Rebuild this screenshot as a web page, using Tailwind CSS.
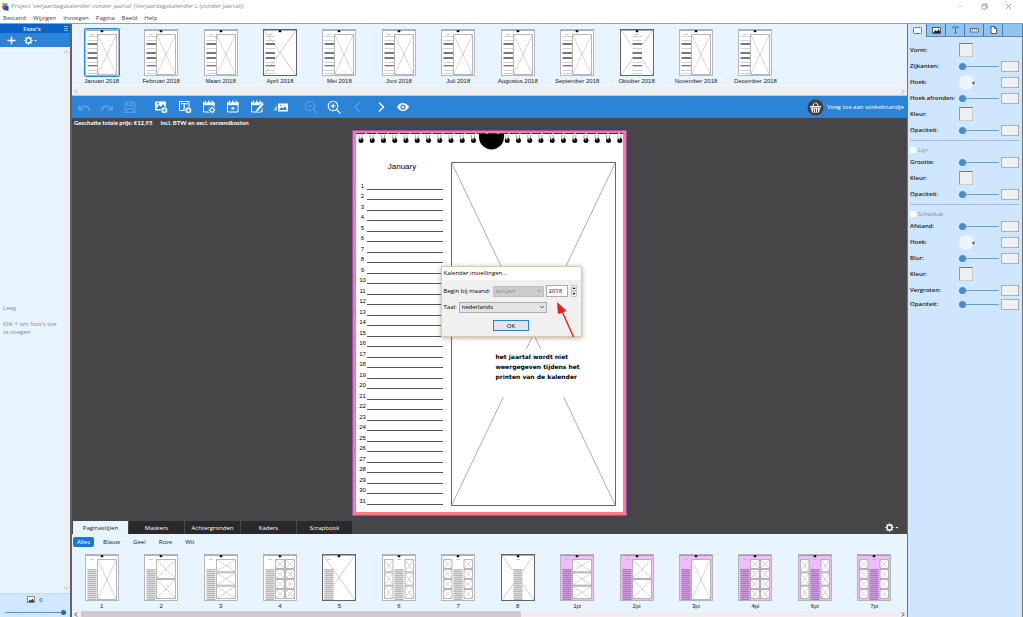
<!DOCTYPE html>
<html lang="nl">
<head>
<meta charset="utf-8">
<title>Project 'verjaardagskalender zonder jaartal'</title>
<script src="https://cdn.jsdelivr.net/npm/@tailwindcss/browser@4"></script>
</head>
<body class="h-screen flex flex-col overflow-hidden bg-white font-['Open_Sans','Noto_Sans',sans-serif] text-[6px] leading-[8px] text-[#222]">

<header class="h-[24px] shrink-0 border-b border-[#9a9fa3]">
  <div class="flex h-[12px] items-center justify-between pl-px pr-[11px]">
    <div class="flex items-center gap-[2px] text-[#8a8a8a]">
      <svg width="8" height="9" viewBox="0 0 8 9"><path d="M1 1h3v4H1z" fill="#f5a623"/><path d="M3 1.500h3.500v4H3z" fill="#3c9be8"/><path d="M1 4h3.500v4H2z" fill="#d8435c"/><path d="M3 4h4.500v4.500H4z" fill="#1e52b8"/></svg>
      <h1>Project 'verjaardagskalender zonder jaartal' (Verjaardagskalender L (zonder jaartal))</h1>
    </div>
    <div class="flex items-center gap-[17px]">
      <button aria-label="Minimaliseren"><svg width="7" height="7" viewBox="0 0 7 7"><path d="M1 3.500h5" stroke="#ddd" fill="none"/></svg></button>
      <button aria-label="Verkleinen"><svg width="7" height="7" viewBox="0 0 7 7" fill="none" stroke="#888" stroke-width=".7"><path d="M1 2.200h4v4H1zM2.200 2V1h4v4H5"/></svg></button>
      <button aria-label="Sluiten"><svg width="7" height="7" viewBox="0 0 7 7" fill="none" stroke="#888" stroke-width=".7"><path d="M1 1l5 5M6 1L1 6"/></svg></button>
    </div>
  </div>
  <nav class="flex h-[11px] items-center gap-[7px] pl-[3px] text-[#444]">
    <button>Bestand</button><button>Wijzigen</button><button>Invoegen</button><button>Pagina</button><button>Beeld</button><button>Help</button>
  </nav>
</header>

<div class="flex min-h-0 flex-1">
  <aside class="flex w-[72px] shrink-0 flex-col border-r-2 border-[#5d6368] bg-[#e8f4ff]">
    <div class="flex h-[9px] items-center bg-[#0864c6] text-white">
      <h2 class="flex-1 text-center font-semibold">Foto's</h2>
      <svg width="5" height="7" viewBox="0 0 5 7" class="mr-px"><path d="M0 1.500h4M0 3.500h4M0 5.500h4" stroke="#b8dcff" stroke-width=".7"/></svg>
    </div>
    <div class="flex h-[14px] items-center gap-[8px] bg-[#2b84d8] pl-[7px]">
      <button aria-label="Toevoegen"><svg width="9" height="9" viewBox="0 0 9 9"><path d="M4.500 .5v8M.5 4.500h8" stroke="#fff" stroke-width="1.500"/></svg></button>
      <button aria-label="Instellingen"><svg width="15" height="9" viewBox="0 0 15 9"><use href="#gear"/><path d="M10 4h3l-1.500 1.500z" fill="#fff"/></svg></button>
    </div>
    <div class="flex min-h-0 flex-1">
      <div class="flex flex-1 flex-col justify-center gap-[8px] pl-[3px] text-[#7e878f]">
        <p>Leeg</p>
        <p class="whitespace-nowrap">Klik + om foto's toe<br>te voegen</p>
      </div>
      <div class="flex w-[7px] flex-col items-center justify-between bg-[#f0f0f0] py-[2px]">
        <svg width="5" height="5" viewBox="0 0 5 5"><path d="M.5 3.500l2-2 2 2" fill="none" stroke="#aaa"/></svg>
        <svg width="5" height="5" viewBox="0 0 5 5"><path d="M.5 1.500l2 2 2-2" fill="none" stroke="#aaa"/></svg>
      </div>
    </div>
    <div class="h-[24px] border-t border-[#c2d8ec] bg-[#cfe7ff]">
      <div class="flex h-[11px] items-center justify-center gap-[4px]">
        <svg width="8" height="7" viewBox="0 0 8 7"><path d="M.5.5h7v6h-7z" fill="#fff" stroke="#555" stroke-width=".7"/><path d="M1 6l2-2.500 1 1L5.500 2.500 7 5v1z" fill="#444"/></svg><span>0</span>
      </div>
      <input type="range" aria-label="Formaat" value="100" class="mx-[5px] my-[4px] block h-[6px] w-[61px] appearance-none bg-[linear-gradient(#5b93c6,#5b93c6)] bg-[length:100%_1px] bg-center bg-no-repeat [&::-webkit-slider-thumb]:size-[5px] [&::-webkit-slider-thumb]:appearance-none [&::-webkit-slider-thumb]:rounded-full [&::-webkit-slider-thumb]:bg-[#2468b0]">
    </div>
  </aside>

  <main class="flex min-w-0 flex-1 flex-col">
    <section class="h-[63px] shrink-0 bg-[#e8f4ff] pt-[5px] pr-[3px]"><div id="months" class="grid grid-cols-14"></div></section>
    <div class="flex h-[9px] shrink-0 items-center justify-between border-b border-[#c4c8cc] bg-[#efefef] px-[2px]">
      <svg width="4" height="5" viewBox="0 0 4 5"><path d="M3 .5l-2 2 2 2" fill="none" stroke="#aaa"/></svg>
      <svg width="4" height="5" viewBox="0 0 4 5"><path d="M1 .5l2 2-2 2" fill="none" stroke="#aaa"/></svg>
    </div>

    <div class="flex h-[22px] shrink-0 items-center bg-[#2b84d8] text-white">
      <div class="flex [&>button]:w-[23px] [&_svg]:mx-auto">
        <button aria-label="Ongedaan maken"><svg width="14" height="14" viewBox="0 0 14 14"><path d="M12.500 11C12 6.500 8 4.500 4 7.500" fill="none" stroke="#5c9fe0" stroke-width="1.800"/><path d="M1 5v5.500h6z" fill="#5c9fe0"/></svg></button>
        <button aria-label="Opnieuw"><svg width="14" height="14" viewBox="0 0 14 14"><path d="M1.500 11C2 6.500 6 4.500 10 7.500" fill="none" stroke="#5c9fe0" stroke-width="1.800"/><path d="M13 5v5.500H7z" fill="#5c9fe0"/></svg></button>
        <button aria-label="Opslaan"><svg width="14" height="14" viewBox="0 0 14 14" fill="none" stroke="#5c9fe0" stroke-width="1.200"><path d="M2 2h9l1 1v9.500H2zM4.500 2v3.500h5V2M4 12.500V8.500h6v4M8 2.500v2"/></svg></button>
      </div>
      <div class="ml-[8px] flex [&>button]:w-[24px] [&_svg]:mx-auto">
        <button aria-label="Foto toevoegen"><svg width="14" height="14" viewBox="0 0 14 14"><path d="M1 1.500h11v9H1z" fill="#fff"/><path d="M2 9l3-4 2 2 2-3 2 3v2z" fill="#2b84d8"/><circle cx="4" cy="3.500" r="1" fill="#2b84d8"/><use href="#plus"/></svg></button>
        <button aria-label="Tekst toevoegen"><svg width="14" height="14" viewBox="0 0 14 14"><path d="M1.500 1.500h9.500v9h-9.500z" fill="none" stroke="#fff"/><path d="M3.500 4.500V3.500h5.500v1M6.250 3.500v5.500M5 9h2.500" fill="none" stroke="#fff" stroke-width="1.200"/><use href="#plus"/></svg></button>
        <button aria-label="Kalenderinstellingen"><svg width="14" height="14" viewBox="0 0 14 14"><use href="#cal"/><circle cx="10" cy="10" r="3.800" fill="#2b84d8"/><g transform="translate(6.300 6.300) scale(.82)"><use href="#gear"/></g></svg></button>
        <button aria-label="Kalender"><svg width="14" height="14" viewBox="0 0 14 14"><use href="#cal"/><path d="M5.500 7.200h2.800v2.300H5.500z" fill="#fff"/></svg></button>
        <button aria-label="Kalender bewerken"><svg width="14" height="14" viewBox="0 0 14 14"><use href="#cal"/><path d="M13 4l-6 7" stroke="#2b84d8" stroke-width="4"/><path d="M13.500 4L8 10.700l-1.500.8.300-1.800L12.300 3z" fill="#fff" stroke="#fff" stroke-width=".5"/></svg></button>
        <button aria-label="Foto's vullen"><svg width="16" height="14" viewBox="0 0 16 14"><path d="M5 3.500h10v8H5z" fill="#fff"/><path d="M6 10l2.200-3 2 1.500L12 6l2 4z" fill="#2b84d8"/><circle cx="7.500" cy="5.500" r=".8" fill="#2b84d8"/><path d="M4 5v5.500H0z" fill="#9cc9f2"/></svg></button>
      </div>
      <div class="ml-[6px] flex [&>button]:w-[23px] [&_svg]:mx-auto">
        <button aria-label="Uitzoomen"><svg width="14" height="14" viewBox="0 0 14 14" fill="none" stroke="#5fa3e2" stroke-width="1.100"><circle cx="6" cy="6" r="4.500"/><path d="M4 6h4M9.300 9.300l4 4"/></svg></button>
        <button aria-label="Inzoomen"><svg width="14" height="14" viewBox="0 0 14 14" fill="none" stroke="#fff" stroke-width="1.100"><circle cx="6" cy="6" r="4.800"/><path d="M3.500 6h5M6 3.500v5M9.500 9.500l4 4"/></svg></button>
        <button aria-label="Vorige"><svg width="14" height="14" viewBox="0 0 14 14"><path d="M9.500 2.500L5 7l4.500 4.500" fill="none" stroke="#5fa3e2" stroke-width="1.200"/></svg></button>
        <button aria-label="Volgende"><svg width="14" height="14" viewBox="0 0 14 14"><path d="M6 2.500L10.500 7 6 11.500" fill="none" stroke="#fff" stroke-width="1.400"/></svg></button>
        <button aria-label="Voorbeeld"><svg width="14" height="14" viewBox="0 0 14 14"><path d="M1 7c3-5.500 9-5.500 12 0-3 5.500-9 5.500-12 0z" fill="#fff"/><circle cx="7" cy="7" r="2.600" fill="#2b84d8"/><circle cx="7" cy="7" r="1.300" fill="#fff"/></svg></button>
      </div>
      <button class="ml-auto mr-[3px] flex items-center gap-[3px] whitespace-nowrap">
        <svg width="17" height="17" viewBox="0 0 17 17"><circle cx="8.500" cy="8.500" r="8" fill="#3d3f42"/><path d="M3 7h11v1.500H3zM4 9h9l-1 4.500H5z" fill="#fff"/><path d="M5.500 7L8 3.500M11.500 7L9 3.500" stroke="#fff"/><path d="M6.500 9.500V13M8.500 9.500V13M10.500 9.500V13" stroke="#3d3f42" stroke-width=".9"/></svg>
        <span>Voeg toe aan winkelmandje</span>
      </button>
    </div>

    <section class="flex min-h-0 flex-1 flex-col bg-[#464649] pr-px">
      <p class="flex h-[12px] shrink-0 items-center gap-[8px] pb-[2px] pl-[2px] font-['Lato',sans-serif] font-bold text-white"><span>Geschatte totale prijs: €12,95</span><span>Incl. BTW en excl. verzendkosten</span></p>
      <div class="relative mx-auto flex h-[386px] w-[275px] shrink-0 border border-[#9a48c0] bg-white font-['Liberation_Sans',sans-serif] text-black outline-[3px] -outline-offset-4 outline-[#ff7c86]">
        <svg class="absolute left-0 top-0" width="273" height="20" viewBox="0 0 273 20" id="spiral"></svg>
        <div class="flex w-[98px] flex-col pl-[6px]">
          <h3 class="mt-[31px] pr-[5px] text-center text-[8px] leading-[10px]">January</h3>
          <ol id="days" class="mt-[7px] grid h-[326px] auto-rows-fr text-[6px] leading-[6px]"></ol>
        </div>
        <svg class="mt-[31px]" width="165" height="344" viewBox="0 0 165 344" fill="none"><path d="M.5.5L164.500 343.500M164.500.5L.5 343.500" stroke="#999" stroke-width=".8"/><path d="M30 187h105v48H30z" fill="#fff"/><path d="M.5.5h164v343H.5z" stroke="#666"/></svg>
        <p class="absolute left-[143px] top-[221px] whitespace-nowrap font-['DejaVu_Sans',sans-serif] text-[6px] leading-[10px] font-bold">het jaartal wordt niet<br>weergegeven tijdens het<br>printen van de kalender</p>

        <form class="absolute left-[88px] top-[135px] flex h-[71px] w-[141px] flex-col border border-[#d8cda4] bg-[#f0f0f0] font-['Open_Sans',sans-serif] text-[6px] leading-[8px] shadow-[0_1px_5px_rgba(80,70,40,.45)]">
          <h2 class="h-[13px] bg-white pl-[2px] pt-[2px]">Kalender instellingen...</h2>
          <div class="mt-[5px] flex h-[12px] items-center pl-[2px]">
            <label for="maand" class="w-[49px] whitespace-nowrap">Begin bij maand:</label>
            <span class="relative"><select id="maand" disabled class="block h-[11px] w-[51px] appearance-none border border-[#bfbfbf] bg-[#ccc] pl-[2px] text-[#8a8a8a] opacity-100"><option>Januari</option></select><svg class="absolute right-[2px] top-[3px]" width="6" height="5" viewBox="0 0 6 5"><path d="M1 1l2 2 2-2" fill="none" stroke="#999" stroke-width=".7"/></svg></span>
            <input aria-label="Jaar" value="2018" class="ml-[2px] h-[12px] w-[22px] border border-[#aaa] bg-white pl-[2px]">
            <svg class="ml-[3px]" width="6" height="12" viewBox="0 0 6 12"><path d="M.5.5h5v5h-5zM.5 6.500h5v5h-5z" fill="#f4f4f4" stroke="#aaa" stroke-width=".6"/><path d="M1.500 4L3 2l1.500 2zM1.500 8L3 10l1.500-2z" fill="#111"/></svg>
          </div>
          <div class="mt-[4px] flex h-[12px] items-center pl-[2px]">
            <label for="taal" class="w-[15px]">Taal:</label>
            <span class="relative"><select id="taal" class="block h-[11px] w-[88px] appearance-none border border-[#adadad] bg-[#e3e3e3] pl-[2px] text-black"><option>nederlands</option></select><svg class="absolute right-[2px] top-[3px]" width="6" height="5" viewBox="0 0 6 5"><path d="M1 1l2 2 2-2" fill="none" stroke="#444" stroke-width=".8"/></svg></span>
          </div>
          <button type="button" class="mt-[7px] mx-auto h-[11px] w-[36px] border border-[#2880c8] bg-[#dfe5ea] leading-[8px]">OK</button>
          <svg class="absolute left-[113px] top-[33px]" width="20" height="39" viewBox="0 0 20 39"><path d="M18.500 37L6 9" stroke="#f01818" stroke-width="1.400"/><path d="M2 2l9.500 9L3 14z" fill="#f01818"/></svg>
        </form>
      </div>
      <div class="mt-auto flex h-[13px] items-end pl-px text-[6px] text-white">
        <div class="flex gap-px [&>button]:h-[13px] [&>button]:w-[55px]">
          <button class="bg-[#e8f4ff] text-[#222]">Paginastijlen</button>
          <button class="bg-[#29292b]">Maskers</button>
          <button class="bg-[#29292b]">Achtergronden</button>
          <button class="bg-[#29292b]">Kaders</button>
          <button class="bg-[#29292b]">Scrapbook</button>
        </div>
        <button aria-label="Opties" class="ml-auto mr-[6px] self-center"><svg width="15" height="9" viewBox="0 0 15 9"><use href="#gear"/><path d="M10.500 4h3L12 5.500z" fill="#fff"/></svg></button>
      </div>
    </section>

    <section class="h-[77px] shrink-0 bg-[#e8f4ff] pr-[3px]">
      <div class="flex h-[15px] items-center gap-[13px] pl-px text-[#222]">
        <button class="-mr-[4px] h-[10px] w-[21px] rounded-[2px] bg-[#1a78d2] text-white">Alles</button><button>Blauw</button><button>Geel</button><button>Roze</button><button>Wit</button>
      </div>
      <div id="styles" class="mt-[5px] grid grid-cols-14"></div>
    </section>
    <div class="flex h-[6px] shrink-0 items-center bg-[#efefef] px-[2px]">
      <svg width="4" height="5" viewBox="0 0 4 5"><path d="M3 .5l-2 2 2 2" fill="none" stroke="#333"/></svg>
      <div class="ml-[3px] h-full w-[53%] bg-[#cbcbcb]"></div>
      <svg class="ml-auto" width="4" height="5" viewBox="0 0 4 5"><path d="M1 .5l2 2-2 2" fill="none" stroke="#333"/></svg>
    </div>
  </main>

  <aside class="w-[116px] shrink-0 border-x border-[#6b747c] bg-[#cfe6ff]">
    <div class="flex h-[13px] border-b border-[#5d87ae] bg-[#8fc4f4] [&>button]:flex [&>button]:w-[19px] [&>button]:items-center [&>button]:justify-center [&>button]:border-r [&>button]:border-[#4f7ba4]">
      <button aria-label="Vorm" class="-mb-px bg-[#cfe6ff]"><svg width="9" height="7" viewBox="0 0 9 7"><rect x=".5" y=".5" width="8" height="6" rx="1" fill="#fff" stroke="#555" stroke-width=".8"/></svg></button>
      <button aria-label="Foto"><svg width="9" height="7" viewBox="0 0 9 7"><path d="M.5.5h8v6h-8z" fill="#fff" stroke="#333" stroke-width=".8"/><path d="M1 6l2.500-3L5 4.500 6.500 2 8 4.500V6z" fill="#222"/></svg></button>
      <button aria-label="Tekst"><svg width="7" height="8" viewBox="0 0 7 8"><path d="M.8 2.500V1h5.400v1.500M3.500 1v6M2.200 7h2.600" fill="none" stroke="#4c6f91" stroke-width="1"/></svg></button>
      <button aria-label="Liniaal"><svg width="9" height="5" viewBox="0 0 9 5"><path d="M.5.5h8v3.500h-8z" fill="#eee" stroke="#555" stroke-width=".8"/><path d="M2.500 1v1.500M4.500 1v1.500M6.500 1v1.500" stroke="#555" stroke-width=".6"/></svg></button>
      <button aria-label="Pagina"><svg width="7" height="8" viewBox="0 0 7 8"><path d="M1 .5h3.500l2 2v5H1z" fill="#fff" stroke="#333" stroke-width=".8"/><path d="M4.500.5v2h2" fill="none" stroke="#333" stroke-width=".7"/></svg></button>
    </div>
    <div id="props" class="pl-[2px] pr-[3px] pt-[5px] text-[#101820]"></div>
  </aside>
</div>

<svg width="0" height="0" class="absolute">
  <defs>
    <g id="gear"><circle cx="4.500" cy="4.500" r="2.500" fill="none" stroke="#fff" stroke-width="1.300"/><path d="M4.500.3v1.500M4.500 7.200v1.500M.3 4.500h1.500M7.200 4.500h1.500M1.500 1.500l1.100 1.100M6.400 6.400l1.100 1.100M7.500 1.500L6.400 2.600M2.600 6.400L1.500 7.500" stroke="#fff" stroke-width="1.200"/></g>
    <g id="plus"><circle cx="10.300" cy="10.300" r="3.700" fill="#2b84d8"/><circle cx="10.300" cy="10.300" r="3" fill="#fff"/><path d="M10.300 8.300v4M8.300 10.300h4" stroke="#2b84d8" stroke-width=".9"/></g>
    <g id="cal"><path d="M1.500 2.500h10.500v9.500H1.500z" fill="none" stroke="#fff"/><path d="M1 2h11.500v3.200H1z" fill="#fff"/><path d="M3.500.5v2.500M6.750.5v2.500M10 .5v2.500" stroke="#fff" stroke-width="1.200"/><path d="M4.500 1.200v2M9 1.200v2" stroke="#2b84d8" stroke-width=".8"/></g>
  </defs>
</svg>

<script>
const crossBox = (x, y, w, h) =>
  `<path d="M${x} ${y}h${w}v${h}h${-w}z" fill="#fff" stroke="#a4a4a4" stroke-width=".8"/><path d="M${x} ${y}l${w} ${h}M${x + w} ${y}l${-w} ${h}" stroke="#aaa" stroke-width=".5"/>`;

// Page thumbnail: photo areas, a list of days and the hanging hole
function thumb({ cols = 1, rows = 1, mid = false, full = false, pink = false, month = false, selected = false }) {
  let s = `<rect x=".5" y=".5" width="33" height="46" fill="${pink ? '#efbdfb' : '#fff'}" stroke="${full ? '#555' : '#b0b0b0'}" stroke-width=".9"/>`;
  const stack = (x, w) => {
    const h = 40 / rows;
    for (let i = 0; i < rows; i++) s += crossBox(x, 5.500 + i * h, w, h - (rows > 1 ? 1 : 0));
  };
  if (full) s += `<path d="M1 1l32 45M33 1L1 46" stroke="#999" stroke-width=".5"/>`;
  else if (mid) { stack(2.500, 8.500); stack(23, 8.500); }
  else if (cols === 2) { stack(12.500, 9); stack(22.500, 9); }
  else stack(12.500, 19);
  const x = mid ? 12.500 : 2.500;
  if (full && mid) s += `<path d="M12 13h10v33H12z" fill="#fff"/>`;
  if (month) {
    [8, 12, 15, 16, 20, 24, 25, 29, 30, 34, 37, 38, 42, 45].forEach((y, i) => {
      const dark = [2, 3, 5, 6, 7, 8, 10].includes(i);
      s += `<path d="M${x} ${y - .5}h9.500" stroke="${dark ? '#777' : '#bbb'}" stroke-width="${dark ? 1 : .7}"/>`;
    });
  } else {
    s += `<path d="M${x} 15h9v31h-9z" fill="${pink ? '#cf9bdf' : '#dcdcdc'}"/>`;
    for (let y = 15.500; y < 46; y += 2) s += `<path d="M${x} ${y}h9" stroke="${pink ? '#9c6cae' : '#a6a6a6'}" stroke-width=".7"/>`;
  }
  s += `<path d="M${x + 2.500} 5.500h4" stroke="#aaa" stroke-width=".6"/><path d="M1 1.500h32" stroke="#888" stroke-width=".7"/><path d="M15.700 1.300h2.600v1.500l-1.300.8-1.300-.8z" fill="#000"/>`;
  if (selected) s += `<rect x="-.5" y="-.5" width="35" height="48" rx="1" fill="none" stroke="#2b84d8" stroke-width="1"/>`;
  return `<svg class="overflow-visible" width="34" height="47" viewBox="0 0 34 47">${s}</svg>`;
}
const cell = (name, opts) => `<button class="flex flex-col items-center whitespace-nowrap font-['Liberation_Sans',sans-serif]">${thumb(opts)}<span class="mt-px">${name}</span></button>`;

document.getElementById('months').innerHTML =
  ['Januari', 'Februari', 'Maart', 'April', 'Mei', 'Juni', 'Juli', 'Augustus', 'September', 'Oktober', 'November', 'December']
    .map((m, i) => cell(m + ' 2018', { month: true, selected: i === 0, full: i === 3 || i === 9, mid: i === 9 })).join('');

document.getElementById('styles').innerHTML = [
  ['1', {}], ['2', { rows: 2 }], ['3', { rows: 3 }], ['4', { cols: 2, rows: 4 }], ['5', { full: true }],
  ['6', { mid: true, rows: 3 }], ['7', { mid: true, rows: 4 }], ['8', { full: true, mid: true }],
  ['1pi', { pink: true, rows: 3 }], ['2pi', { pink: true, rows: 2 }], ['3pi', { pink: true }],
  ['4pi', { pink: true, cols: 2, rows: 4 }], ['6pi', { pink: true, mid: true, rows: 3 }], ['7pi', { pink: true, mid: true, rows: 4 }]
].map(([n, o]) => cell(n, o)).join('');

let days = '';
for (let d = 1; d <= 31; d++)
  days += `<li class="flex items-end"><span class="w-[8px] pb-px text-center">${d}</span><span class="h-px w-[76px] bg-[#555]"></span></li>`;
document.getElementById('days').innerHTML = days;

let rings = '<path d="M3 2.500h267" stroke="#8a1030" stroke-width="1" stroke-dasharray="9 2"/>';
for (let i = 0; i < 24; i++) {
  if (i === 11) continue;
  const x = 8 + i * 11.250;
  rings += `<path d="M${x - 2} 4v3.500M${x + 1} 4v4" stroke="#888" stroke-width=".8"/><circle cx="${x}" cy="9.500" r="2.500" fill="#0a0a0a"/><circle cx="${x - .5}" cy="8" r=".8" fill="#eee"/>`;
}
rings += '<path d="M126 3h25v3a12.500 12.500 0 0 1-25 0z" fill="#000"/>';
document.getElementById('spiral').innerHTML = rings;

const box = n => `<input aria-label="${n} waarde" class="ml-auto h-[11px] w-[18px] border border-[#a9b0b6] bg-[#f0f0f0]">`;
const controls = {
  slider: n => `<input type="range" value="0" aria-label="${n}" class="h-[8px] w-[40px] appearance-none bg-[linear-gradient(#6d9ecb,#6d9ecb)] bg-[length:100%_1px] bg-center bg-no-repeat [&::-webkit-slider-thumb]:size-[7px] [&::-webkit-slider-thumb]:appearance-none [&::-webkit-slider-thumb]:rounded-full [&::-webkit-slider-thumb]:bg-[#4a8ccb]">` + box(n),
  knob: n => `<svg width="17" height="15" viewBox="0 0 17 15"><circle cx="7.500" cy="7.500" r="7.300" fill="#eef5fb"/><circle cx="14.500" cy="8" r="1.500" fill="#777"/></svg>` + box(n),
  color: n => `<button aria-label="${n}" class="size-[14px] rounded-[1px] border border-r-[#ccc] border-b-[#ccc] border-l-[#999] border-t-[#777] bg-[#f0efee]"></button>`
};
const row = ([n, c, small]) => `<div class="flex ${small ? 'h-[12px]' : 'h-[16px]'} items-center"><span class="w-[49px] whitespace-nowrap font-semibold">${n}:</span>${controls[c](n)}</div>`;
const check = n => `<div class="mt-[2px] h-px bg-[#a5bed6]"></div><label class="mt-[4px] flex h-[9px] items-center gap-[2px] text-[#7f8c98]"><input type="checkbox" class="size-[6px] appearance-none bg-white">${n}</label>`;
document.getElementById('props').innerHTML =
  [['Vorm', 'color'], ['Zijkanten', 'slider'], ['Hoek', 'knob'], ['Hoek afronden', 'slider'], ['Kleur', 'color'], ['Opaciteit', 'slider']].map(row).join('') +
  check('Lijn') + [['Grootte', 'slider'], ['Kleur', 'color'], ['Opaciteit', 'slider']].map(row).join('') +
  check('Schaduw') + [['Afstand', 'slider'], ['Hoek', 'knob'], ['Blur', 'slider'], ['Kleur', 'color'], ['Vergroten', 'slider'], ['Opaciteit', 'slider', true]].map(row).join('');
</script>
</body>
</html>
